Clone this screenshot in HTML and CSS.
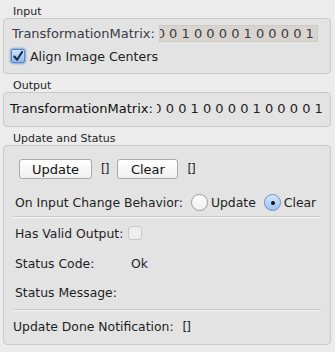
FILE: index.html
```html
<html lang="en">
<head>
  <meta charset="UTF-8" />
  <title>Transform</title>
  <link rel="stylesheet" href="styles.css">
</head>
<body>
  <div class="group-title">Input</div>
  <div class="group input-group">
    <div class="row">
      <span class="field-label">TransformationMatrix:</span>
      <div class="text-field"><span>0 0 1 0 0 0 0 1 0 0 0 0 1</span></div>
    </div>
    <label class="check-row">
      <span class="checkbox checked">
        <svg width="13" height="13" viewBox="0 0 13 13"><path d="M2.5 6.5 L5.5 10 L11 1.5" fill="none" stroke="#1b2a4a" stroke-width="2.2" stroke-linecap="round" stroke-linejoin="round"/></svg>
      </span>
      Align Image Centers
    </label>
  </div>

  <div class="group-title">Output</div>
  <div class="group output-group">
    <div class="row">
      <span class="field-label">TransformationMatrix:</span>
      <div class="value-clip"><span>0 0 0 1 0 0 0 0 1 0 0 0 0 1</span></div>
    </div>
  </div>

  <div class="group-title">Update and Status</div>
  <div class="group status-group">
    <div class="button-row">
      <button class="btn btn-update">Update</button>
      <span class="brackets">[]</span>
      <button class="btn btn-clear">Clear</button>
      <span class="brackets">[]</span>
    </div>
    <div class="radio-row">
      <span>On Input Change Behavior:</span>
      <span class="radio"></span><span>Update</span>
      <span class="radio selected"></span><span>Clear</span>
    </div>
    <div class="separator"></div>
    <div class="status-row valid-row">
      <span>Has Valid Output:</span>
      <span class="checkbox disabled"></span>
    </div>
    <div class="status-row code-row">
      <span class="status-key">Status Code:</span>
      <span>Ok</span>
    </div>
    <div class="status-row message-row">
      <span>Status Message:</span>
    </div>
    <div class="separator"></div>
    <div class="notify-row">Update Done Notification: <span class="notify-val">[]</span></div>
  </div>
</body>
</html>
```
FILE: styles.css
```css
body {
  margin: 0;
  padding: 0 4px 0 3px;
  background-color: #ececec;
  color: #1e1e1e;
  font-family: "DejaVu Sans", sans-serif;
  font-size: 12.4px;
}
.group-title {
  font-size: 11px;
  padding-left: 10px;
  height: 18px;
  line-height: 14px;
  padding-top: 5px;
  box-sizing: border-box;
}
.group {
  background: #e3e3e3;
  border: 1px solid #c9c9c9;
  border-radius: 4px;
  box-sizing: border-box;
}
.input-group {
  height: 56px;
  padding: 6px 0 0 8px;
}
.output-group {
  height: 35px;
  padding: 7px 0 0 6px;
}
.status-group {
  height: 200px;
  padding: 13px 9px 0 10px;
}
.row {
  display: flex;
  align-items: center;
  height: 17px;
  font-size: 13px;
}
.field-label {
  color: #3a3a44;
  white-space: nowrap;
}
.output-group .field-label {
  color: #111;
}
.text-field {
  margin-left: 4px;
  width: 159px;
  height: 17px;
  box-sizing: border-box;
  background: #d9d5ce;
  border: 1px solid #cfcbc4;
  color: #3a3a44;
  display: flex;
  justify-content: flex-end;
  align-items: center;
  overflow: hidden;
  white-space: nowrap;
  padding-right: 3px;
}
.value-clip {
  margin-left: 4px;
  width: 166px;
  display: flex;
  justify-content: flex-end;
  overflow: hidden;
  white-space: nowrap;
  padding-right: 2px;
}
.check-row {
  display: flex;
  align-items: center;
  gap: 5px;
  margin-top: 5px;
  margin-left: -1px;
  height: 18px;
  font-size: 12.6px;
}
.checkbox {
  width: 12px;
  height: 12px;
  border: 1px solid #9a9a9a;
  border-radius: 2px;
  background: #fafafa;
  display: inline-flex;
  align-items: center;
  justify-content: center;
}
.checkbox.checked {
  background: linear-gradient(#cfe3fb, #8fb9ea);
  border-color: #5c87c4;
  box-shadow: 0 0 2px 1px #7fa6da;
}
.checkbox.disabled {
  width: 12px;
  height: 12px;
  border-color: #c9c9c9;
  border-radius: 3px;
  background: #ededed;
  margin-left: 5px;
}
.button-row {
  display: flex;
  align-items: center;
  height: 20px;
  padding-left: 5px;
}
.btn {
  font-family: "DejaVu Sans", sans-serif;
  font-size: 13px;
  height: 20px;
  padding: 0;
  border: 1px solid #a9a9a9;
  border-radius: 3px;
  background: linear-gradient(#ffffff, #f0f0f0);
  color: #111;
}
.btn-update {
  width: 73px;
}
.btn-clear {
  width: 61px;
}
.brackets {
  font-size: 12px;
  letter-spacing: -1px;
  margin: 0 9px 0 9px;
}
.radio-row {
  display: flex;
  align-items: center;
  margin-top: 14px;
  height: 18px;
  white-space: nowrap;
  padding-left: 1px;
}
.radio {
  width: 15px;
  height: 15px;
  border: 1px solid #9d9d9d;
  border-radius: 50%;
  background: linear-gradient(#fefefe, #efefef);
  margin: 0 3px 0 8px;
  position: relative;
}
.radio.selected {
  margin-left: 8px;
  background: linear-gradient(#d3e6fc, #9cc3ef);
  border-color: #6a8fc4;
}
.radio.selected::after {
  content: "";
  position: absolute;
  left: 6px;
  top: 6px;
  width: 4px;
  height: 4px;
  border-radius: 50%;
  background: #111;
}
.separator {
  height: 1px;
  background: #c6c6c6;
  border-bottom: 1px solid #f6f6f6;
  margin: 5px 0 0 0;
}
.status-row {
  display: flex;
  align-items: center;
  height: 18px;
  padding-left: 1px;
}
.valid-row {
  margin-top: 6px;
}
.code-row {
  margin-top: 12px;
}
.message-row {
  margin-top: 11px;
}
.message-row + .separator {
  margin-top: 8px;
}
.status-key {
  width: 116px;
}
.notify-row {
  margin-top: 7px;
  margin-left: -1px;
  height: 18px;
  line-height: 18px;
}
.notify-val {
  font-size: 12px;
  letter-spacing: -1px;
  margin-left: 5px;
}
```
